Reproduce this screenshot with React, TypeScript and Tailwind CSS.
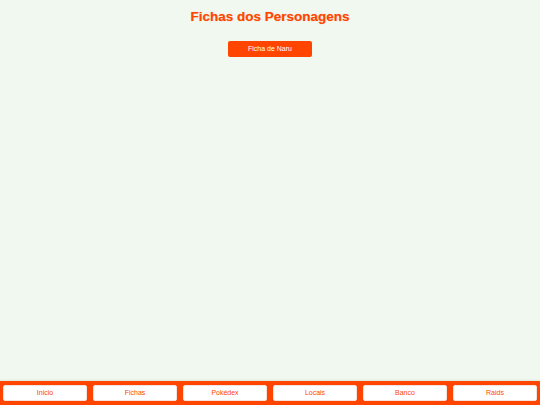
export default function App() {
  const tabs = ["Inicio", "Fichas", "Pokédex", "Locais", "Banco", "Raids"];
  return (
    <div className="w-[540px] h-[405px] bg-[#f0f8f0] flex flex-col font-['Liberation_Sans',Arial,sans-serif]">
      <div className="flex-1 flex flex-col items-center">
        <h1 className="mt-[8px] text-[13.5px] leading-[17px] font-bold text-[#ff4500] [text-shadow:0_0_1px_rgba(255,69,0,0.4)]">
          Fichas dos Personagens
        </h1>
        <button className="mt-[16px] w-[84px] h-[16px] rounded-[2px] bg-[#ff4500] text-white text-[7px] leading-[16px]">
          Ficha de Naru
        </button>
      </div>
      <div className="h-[24px] bg-[#ff4500] flex gap-[6px] px-[3px] pt-[4px] shadow-[0_-1px_2px_rgba(0,0,0,0.08)]">
        {tabs.map((t) => (
          <button
            key={t}
            className="w-[84px] h-[16px] rounded-[2px] bg-white border border-[#f3e3dc] text-[#ff4500] text-[7px] leading-[14px]"
          >
            {t}
          </button>
        ))}
      </div>
    </div>
  );
}
